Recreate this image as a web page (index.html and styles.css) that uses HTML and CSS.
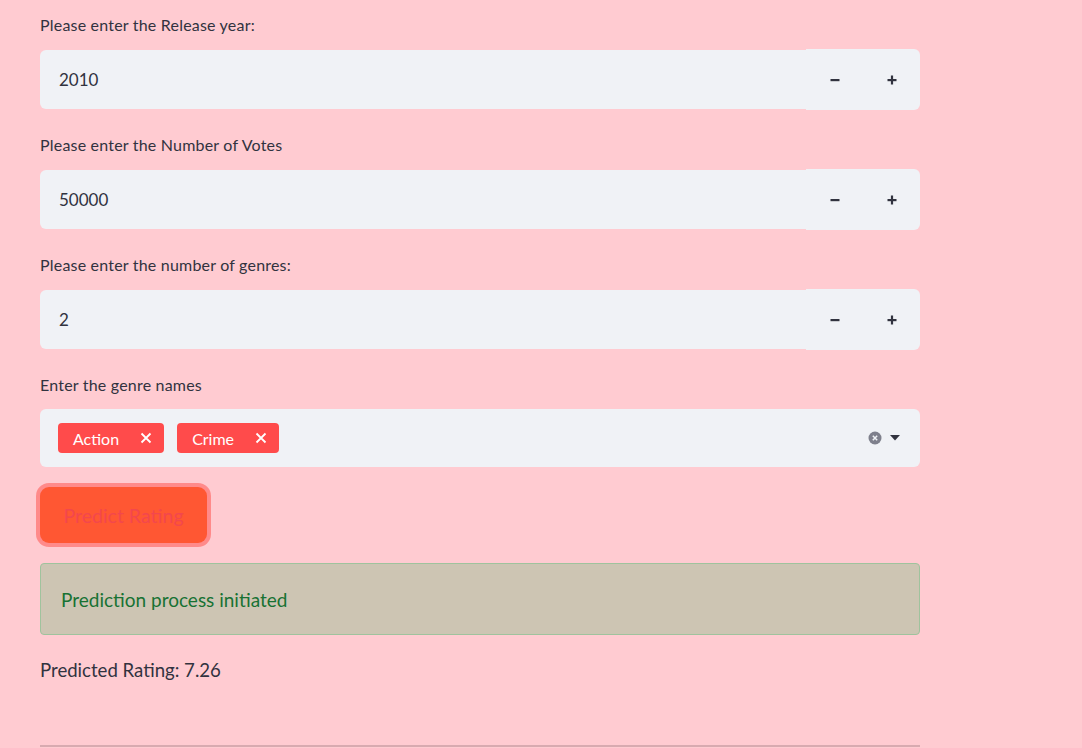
FILE: index.html
```html
<!DOCTYPE html>
<html>
<head>
<meta charset="utf-8">
<link rel="stylesheet" href="styles.css">
</head>
<body>
<main class="page">
  <div class="field">
    <label class="label">Please enter the Release year:</label>
    <div class="num">
      <div class="num-input">2010</div>
      <div class="steps">
        <span class="step"><svg width="10" height="10" viewBox="0 0 10 10"><rect x="0.5" y="4" width="9" height="2.2" fill="#31333f"/></svg></span>
        <span class="step"><svg width="10" height="10" viewBox="0 0 10 10"><rect x="0.5" y="4" width="9" height="2.2" fill="#31333f"/><rect x="3.9" y="0.5" width="2.2" height="9" fill="#31333f"/></svg></span>
      </div>
    </div>
  </div>
  <div class="field">
    <label class="label">Please enter the Number of Votes</label>
    <div class="num">
      <div class="num-input">50000</div>
      <div class="steps">
        <span class="step"><svg width="10" height="10" viewBox="0 0 10 10"><rect x="0.5" y="4" width="9" height="2.2" fill="#31333f"/></svg></span>
        <span class="step"><svg width="10" height="10" viewBox="0 0 10 10"><rect x="0.5" y="4" width="9" height="2.2" fill="#31333f"/><rect x="3.9" y="0.5" width="2.2" height="9" fill="#31333f"/></svg></span>
      </div>
    </div>
  </div>
  <div class="field">
    <label class="label">Please enter the number of genres:</label>
    <div class="num">
      <div class="num-input">2</div>
      <div class="steps">
        <span class="step"><svg width="10" height="10" viewBox="0 0 10 10"><rect x="0.5" y="4" width="9" height="2.2" fill="#31333f"/></svg></span>
        <span class="step"><svg width="10" height="10" viewBox="0 0 10 10"><rect x="0.5" y="4" width="9" height="2.2" fill="#31333f"/><rect x="3.9" y="0.5" width="2.2" height="9" fill="#31333f"/></svg></span>
      </div>
    </div>
  </div>
  <div class="field">
    <label class="label">Enter the genre names</label>
    <div class="multi">
      <div class="tags">
        <span class="tag">Action<svg class="x" width="12" height="12" viewBox="0 0 12 12"><path d="M1.5 1.5L10.5 10.5M10.5 1.5L1.5 10.5" stroke="#fff" stroke-width="1.8"/></svg></span>
        <span class="tag">Crime<svg class="x" width="12" height="12" viewBox="0 0 12 12"><path d="M1.5 1.5L10.5 10.5M10.5 1.5L1.5 10.5" stroke="#fff" stroke-width="1.8"/></svg></span>
      </div>
      <div class="ctrls">
        <svg width="14" height="14" viewBox="0 0 14 14"><circle cx="7" cy="7" r="6.5" fill="#7e808c"/><path d="M4.8 4.8L9.2 9.2M9.2 4.8L4.8 9.2" stroke="#f0f2f6" stroke-width="1.5"/></svg>
        <svg width="10" height="6" viewBox="0 0 10 6"><path d="M0 0H10L5 5.5Z" fill="#31333f"/></svg>
      </div>
    </div>
  </div>
  <button class="btn">Predict Rating</button>
  <div class="alert">Prediction process initiated</div>
  <p class="result">Predicted Rating: 7.26</p>
  <hr class="rule">
</main>
</body>
</html>
```
FILE: styles.css
```css
* { box-sizing: border-box; }
html, body { margin: 0; padding: 0; }
body {
  background: #ffcbd1;
  font-family: "Lato", "Noto Sans", sans-serif;
  color: #31333f;
  height: 748px;
  overflow: hidden;
}
.page {
  width: 880px;
  margin-left: 40px;
  padding-top: 14px;
  display: flex;
  flex-direction: column;
}
.field {
  display: flex;
  flex-direction: column;
  margin-bottom: 25px;
}
.field:nth-child(4) { margin-bottom: 20px; }
.label {
  font-size: 16px;
  line-height: 22px;
  margin-bottom: 14px;
  letter-spacing: 0.2px;
}
.num {
  display: flex;
  height: 59px;
}
.num-input {
  flex: 1;
  background: #f0f2f6;
  border-radius: 6px 0 0 6px;
  display: flex;
  align-items: center;
  padding-left: 19px;
  font-size: 17px;
}
.steps {
  display: flex;
  width: 114px;
  background: #f0f2f6;
  border-radius: 0 6px 6px 0;
  margin: -1px 0;
}
.step {
  flex: 1;
  display: flex;
  align-items: center;
  justify-content: center;
}
.multi {
  height: 58px;
  margin-top: -1px;
  background: #f0f2f6;
  border-radius: 6px;
  display: flex;
  align-items: center;
  justify-content: space-between;
  padding: 0 20px 0 18px;
}
.tags { display: flex; gap: 13px; }
.tag {
  background: #ff4b4b;
  color: #fff;
  height: 30px;
  border-radius: 4px;
  display: flex;
  align-items: center;
  padding: 0 12px 0 15px;
  font-size: 16px;
  gap: 21px;
}
.ctrls { display: flex; align-items: center; gap: 8px; }
.btn {
  align-self: flex-start;
  margin: 0;
  width: 167px;
  height: 56px;
  background: #ff5733;
  border: none;
  border-radius: 9px;
  box-shadow: 0 0 0 4px #ff8a8a;
  color: #f3474d;
  font-family: inherit;
  font-size: 19.5px;
}
.alert {
  margin-top: 20px;
  height: 72px;
  background: #cdc5b3;
  border: 1px solid #9fc39d;
  border-radius: 4px;
  display: flex;
  align-items: center;
  padding-left: 20px;
  color: #177233;
  font-size: 19px;
}
.result {
  margin: 23px 0 0 0;
  font-size: 18.6px;
  line-height: 24px;
}
.rule {
  margin: 63px 0 0 0;
  border: none;
  border-top: 2px solid #d8aab0;
}
```
